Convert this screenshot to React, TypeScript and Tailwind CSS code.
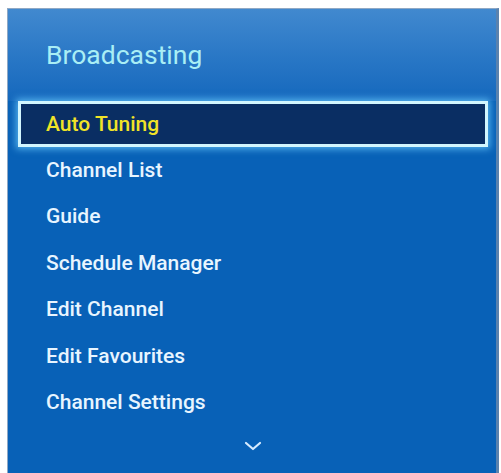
// Broadcasting menu entries, first one is the focused row
const items = [
  "Auto Tuning",
  "Channel List",
  "Guide",
  "Schedule Manager",
  "Edit Channel",
  "Edit Favourites",
  "Channel Settings",
];

const font = { fontFamily: "Roboto, 'Liberation Sans', sans-serif" };

function MoreArrow() {
  return (
    <svg width="18" height="10" viewBox="0 0 18 10" fill="none">
      <path d="M2 2 L9 8 L16 2" stroke="#d6ebff" strokeWidth="2.2" strokeLinecap="round" strokeLinejoin="round" />
    </svg>
  );
}

export default function App() {
  return (
    <div className="h-[473px] w-[501px] overflow-hidden bg-white" style={font}>
      <div className="ml-[7px] mt-[8px] h-[465px] w-[492px] border-l border-t border-r-[3px] border-l-[#8fa8c4] border-t-[#8fa8c4] border-r-[#5a82ae] bg-[#0861b7]">
        {/* title band */}
        <div className="flex h-[92px] items-center bg-gradient-to-b from-[#4189cf] via-[#2a78c6] to-[#1468bd] pl-[38px]">
          <span className="text-[26.5px] leading-none text-[#a9eef5]">Broadcasting</span>
        </div>

        <div className="pl-[10px] pr-[8px]">
          {items.map((label, i) =>
            i === 0 ? (
              <div
                key={label}
                className="flex h-[46px] items-center border-[3px] border-[#d2f6ff] bg-[#0a2e63] pl-[25px] shadow-[0_0_7px_2px_rgba(110,205,255,0.75)]"
              >
                <span className="text-[21px] font-medium leading-none text-[#f1e327]">{label}</span>
              </div>
            ) : (
              <div key={label} className="flex h-[46.5px] items-center pl-[28px]">
                <span className="text-[21px] font-medium leading-none text-[#e8f5ff]">{label}</span>
              </div>
            )
          )}
          <div className="flex h-[40px] items-center justify-center">
            <MoreArrow />
          </div>
        </div>
      </div>
    </div>
  );
}
